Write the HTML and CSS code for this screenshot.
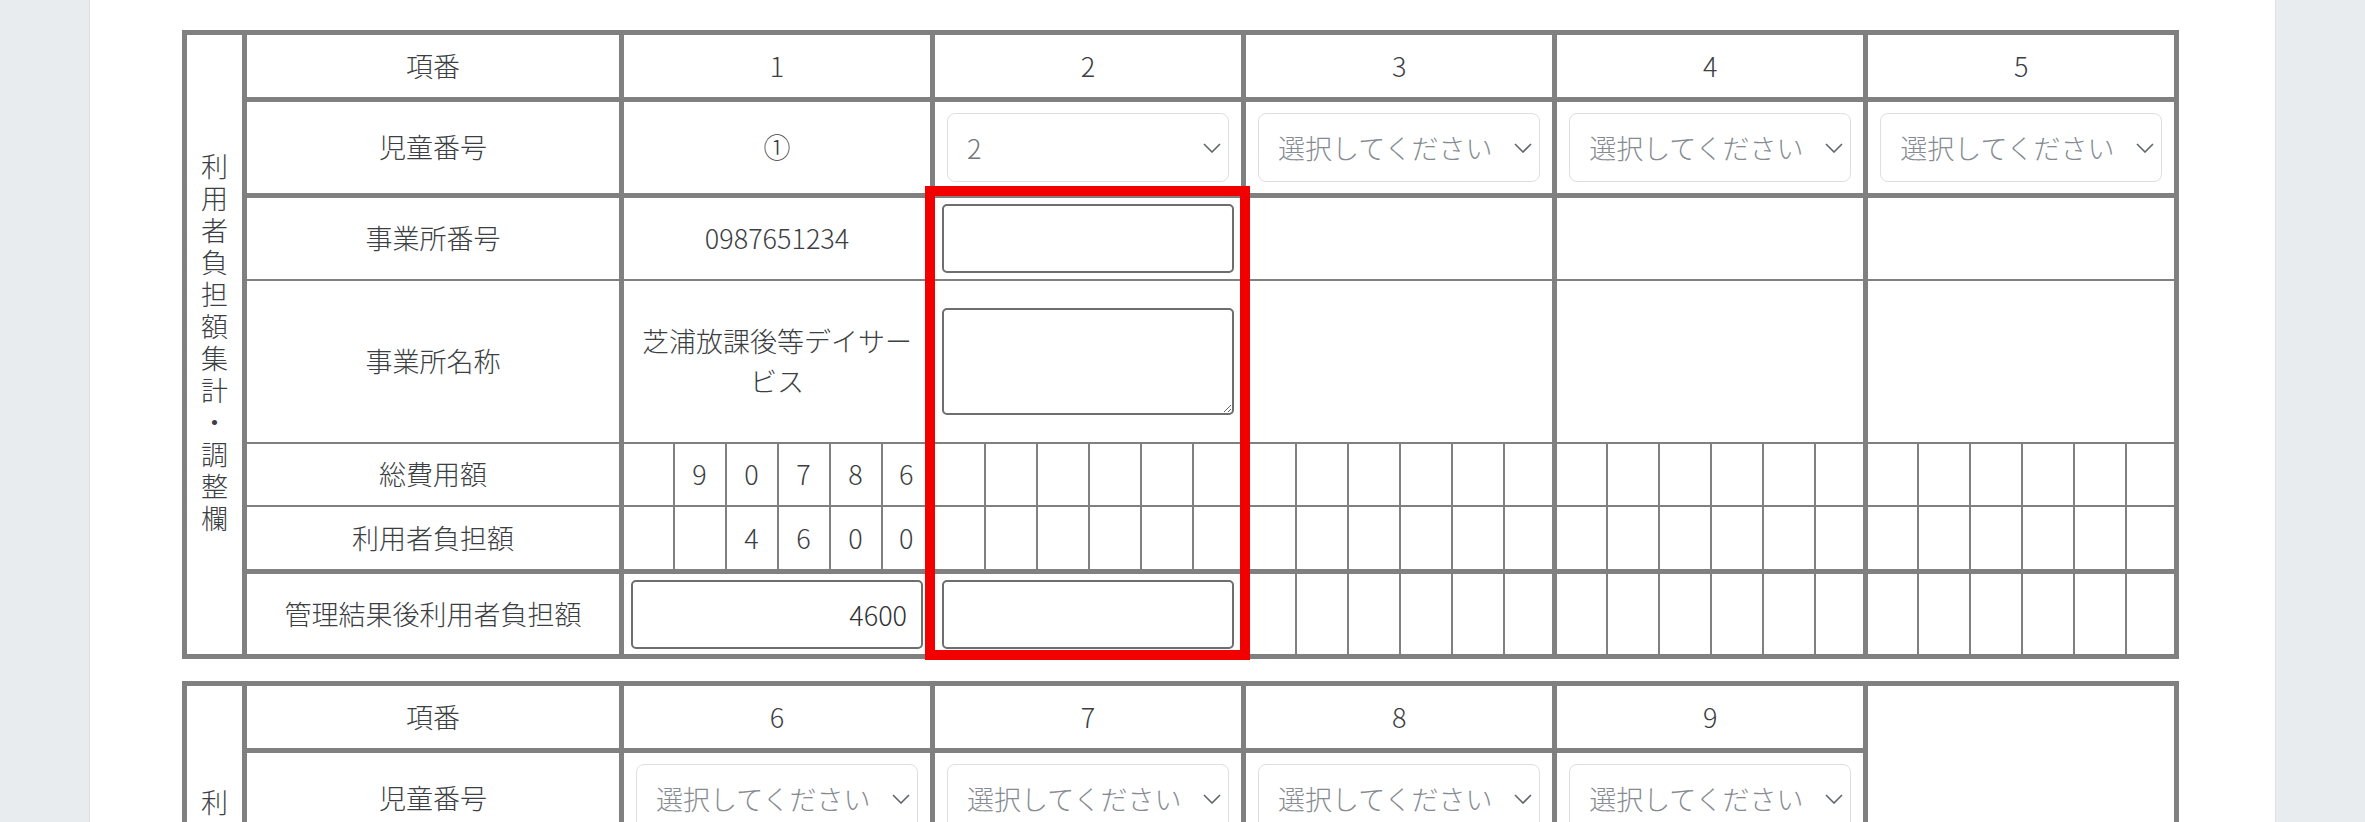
FILE: index.html
```html
<!DOCTYPE html>
<html lang="ja">
<head>
<meta charset="utf-8">
<title>利用者負担額集計・調整欄</title>
<link rel="stylesheet" href="styles.css">
</head>
<body>
<div class="page">
  <div class="sheet">
    <table class="grid">
      <colgroup>
        <col class="c-v"><col class="c-l">
        <col class="c-d"><col class="c-d"><col class="c-d"><col class="c-d"><col class="c-d"><col class="c-e">
        <col class="c-d"><col class="c-d"><col class="c-d"><col class="c-d"><col class="c-d"><col class="c-e">
        <col class="c-d"><col class="c-d"><col class="c-d"><col class="c-d"><col class="c-d"><col class="c-e">
        <col class="c-d"><col class="c-d"><col class="c-d"><col class="c-d"><col class="c-d"><col class="c-e">
        <col class="c-d"><col class="c-d"><col class="c-d"><col class="c-d"><col class="c-d"><col class="c-e">
      </colgroup>
      <tbody>
        <tr class="r-no b-thick">
          <th rowspan="7" class="vhead"><div class="vtext">利用者負担額集計・調整欄</div></th>
          <th class="label">項番</th>
          <td colspan="6">1</td><td colspan="6">2</td><td colspan="6">3</td><td colspan="6">4</td><td colspan="6">5</td>
        </tr>
        <tr class="r-child b-thick">
          <th class="label">児童番号</th>
          <td colspan="6">①</td>
          <td colspan="6"><div class="selwrap"><select class="sel sel-value"><option>2</option></select><svg class="chev" width="18" height="10" viewBox="0 0 18 10"><polyline points="1,1 9,9 17,1"/></svg></div></td>
          <td colspan="6"><div class="selwrap"><select class="sel"><option>選択してください</option></select><svg class="chev" width="18" height="10" viewBox="0 0 18 10"><polyline points="1,1 9,9 17,1"/></svg></div></td>
          <td colspan="6"><div class="selwrap"><select class="sel"><option>選択してください</option></select><svg class="chev" width="18" height="10" viewBox="0 0 18 10"><polyline points="1,1 9,9 17,1"/></svg></div></td>
          <td colspan="6"><div class="selwrap"><select class="sel"><option>選択してください</option></select><svg class="chev" width="18" height="10" viewBox="0 0 18 10"><polyline points="1,1 9,9 17,1"/></svg></div></td>
        </tr>
        <tr class="r-office b-thin">
          <th class="label">事業所番号</th>
          <td colspan="6">0987651234</td>
          <td colspan="6"><input class="field" type="text"></td>
          <td colspan="6"></td><td colspan="6"></td><td colspan="6"></td>
        </tr>
        <tr class="r-name b-thin">
          <th class="label">事業所名称</th>
          <td colspan="6" class="wrap">芝浦放課後等デイサービス</td>
          <td colspan="6"><textarea class="area"></textarea></td>
          <td colspan="6"></td><td colspan="6"></td><td colspan="6"></td>
        </tr>
        <tr class="r-digit b-thin">
          <th class="label">総費用額</th>
          <td class="sub g"></td><td class="sub">9</td><td class="sub">0</td><td class="sub">7</td><td class="sub">8</td><td class="sub ge">6</td>
          <td class="sub g"></td><td class="sub"></td><td class="sub"></td><td class="sub"></td><td class="sub"></td><td class="sub ge"></td>
          <td class="sub g"></td><td class="sub"></td><td class="sub"></td><td class="sub"></td><td class="sub"></td><td class="sub ge"></td>
          <td class="sub g"></td><td class="sub"></td><td class="sub"></td><td class="sub"></td><td class="sub"></td><td class="sub ge"></td>
          <td class="sub g"></td><td class="sub"></td><td class="sub"></td><td class="sub"></td><td class="sub"></td><td class="sub ge"></td>
        </tr>
        <tr class="r-digit2 b-thick">
          <th class="label">利用者負担額</th>
          <td class="sub g"></td><td class="sub"></td><td class="sub">4</td><td class="sub">6</td><td class="sub">0</td><td class="sub ge">0</td>
          <td class="sub g"></td><td class="sub"></td><td class="sub"></td><td class="sub"></td><td class="sub"></td><td class="sub ge"></td>
          <td class="sub g"></td><td class="sub"></td><td class="sub"></td><td class="sub"></td><td class="sub"></td><td class="sub ge"></td>
          <td class="sub g"></td><td class="sub"></td><td class="sub"></td><td class="sub"></td><td class="sub"></td><td class="sub ge"></td>
          <td class="sub g"></td><td class="sub"></td><td class="sub"></td><td class="sub"></td><td class="sub"></td><td class="sub ge"></td>
        </tr>
        <tr class="r-final b-thick">
          <th class="label">管理結果後利用者負担額</th>
          <td colspan="6"><input class="field num" type="text" value="4600"></td>
          <td colspan="6"><input class="field" type="text"></td>
          <td class="sub g"></td><td class="sub"></td><td class="sub"></td><td class="sub"></td><td class="sub"></td><td class="sub ge"></td>
          <td class="sub g"></td><td class="sub"></td><td class="sub"></td><td class="sub"></td><td class="sub"></td><td class="sub ge"></td>
          <td class="sub g"></td><td class="sub"></td><td class="sub"></td><td class="sub"></td><td class="sub"></td><td class="sub ge"></td>
        </tr>
      </tbody>
    </table>
    <div class="highlight"></div>
  </div>

  <div class="sheet sheet-second">
    <table class="grid">
      <colgroup>
        <col class="c-v"><col class="c-l">
        <col class="c-d"><col class="c-d"><col class="c-d"><col class="c-d"><col class="c-d"><col class="c-e">
        <col class="c-d"><col class="c-d"><col class="c-d"><col class="c-d"><col class="c-d"><col class="c-e">
        <col class="c-d"><col class="c-d"><col class="c-d"><col class="c-d"><col class="c-d"><col class="c-e">
        <col class="c-d"><col class="c-d"><col class="c-d"><col class="c-d"><col class="c-d"><col class="c-e">
        <col class="c-d"><col class="c-d"><col class="c-d"><col class="c-d"><col class="c-d"><col class="c-e">
      </colgroup>
      <tbody>
        <tr class="r-no b-thick">
          <th rowspan="7" class="vhead"><div class="vtext">利用者負担額集計・調整欄</div></th>
          <th class="label">項番</th>
          <td colspan="6">6</td><td colspan="6">7</td><td colspan="6">8</td><td colspan="6">9</td>
          <td colspan="6" rowspan="7" class="blank"></td>
        </tr>
        <tr class="r-child b-thick">
          <th class="label">児童番号</th>
          <td colspan="6"><div class="selwrap"><select class="sel"><option>選択してください</option></select><svg class="chev" width="18" height="10" viewBox="0 0 18 10"><polyline points="1,1 9,9 17,1"/></svg></div></td>
          <td colspan="6"><div class="selwrap"><select class="sel"><option>選択してください</option></select><svg class="chev" width="18" height="10" viewBox="0 0 18 10"><polyline points="1,1 9,9 17,1"/></svg></div></td>
          <td colspan="6"><div class="selwrap"><select class="sel"><option>選択してください</option></select><svg class="chev" width="18" height="10" viewBox="0 0 18 10"><polyline points="1,1 9,9 17,1"/></svg></div></td>
          <td colspan="6"><div class="selwrap"><select class="sel"><option>選択してください</option></select><svg class="chev" width="18" height="10" viewBox="0 0 18 10"><polyline points="1,1 9,9 17,1"/></svg></div></td>
        </tr>
        <tr class="r-office b-thin">
          <th class="label">事業所番号</th>
          <td colspan="6"></td><td colspan="6"></td><td colspan="6"></td><td colspan="6"></td>
        </tr>
        <tr class="r-name2 b-thin">
          <th class="label">事業所名称</th>
          <td colspan="6"></td><td colspan="6"></td><td colspan="6"></td><td colspan="6"></td>
        </tr>
        <tr class="r-digit b-thin">
          <th class="label">総費用額</th>
          <td class="sub g"></td><td class="sub"></td><td class="sub"></td><td class="sub"></td><td class="sub"></td><td class="sub ge"></td>
          <td class="sub g"></td><td class="sub"></td><td class="sub"></td><td class="sub"></td><td class="sub"></td><td class="sub ge"></td>
          <td class="sub g"></td><td class="sub"></td><td class="sub"></td><td class="sub"></td><td class="sub"></td><td class="sub ge"></td>
          <td class="sub g"></td><td class="sub"></td><td class="sub"></td><td class="sub"></td><td class="sub"></td><td class="sub ge"></td>
        </tr>
        <tr class="r-digit2 b-thick">
          <th class="label">利用者負担額</th>
          <td class="sub g"></td><td class="sub"></td><td class="sub"></td><td class="sub"></td><td class="sub"></td><td class="sub ge"></td>
          <td class="sub g"></td><td class="sub"></td><td class="sub"></td><td class="sub"></td><td class="sub"></td><td class="sub ge"></td>
          <td class="sub g"></td><td class="sub"></td><td class="sub"></td><td class="sub"></td><td class="sub"></td><td class="sub ge"></td>
          <td class="sub g"></td><td class="sub"></td><td class="sub"></td><td class="sub"></td><td class="sub"></td><td class="sub ge"></td>
        </tr>
        <tr class="r-final b-thick">
          <th class="label">管理結果後利用者負担額</th>
          <td colspan="6"></td><td colspan="6"></td><td colspan="6"></td><td colspan="6"></td>
        </tr>
      </tbody>
    </table>
  </div>
</div>
</body>
</html>
```

FILE: styles.css
```css
html, body {
  margin: 0;
  padding: 0;
}

body {
  background: #e9ecef;
  font-family: "Noto Sans CJK JP", "Noto Sans", sans-serif;
  font-size: 27px;
  font-weight: 300;
  color: #3b3e42;
  overflow: hidden;
}

.page {
  box-sizing: border-box;
  width: 2187px;
  height: 822px;
  margin: 0 auto;
  padding: 30px 0 0 92px;
  background: #ffffff;
  border-left: 1px solid #dde1e5;
  border-right: 1px solid #dde1e5;
  overflow: hidden;
}

.sheet {
  position: relative;
  width: 1997px;
}

.sheet-second {
  margin-top: 22px;
}

.grid {
  border-collapse: collapse;
  table-layout: fixed;
  width: 1997px;
  border: 5px solid #808080;
}

.c-v { width: 60px; }
.c-l { width: 377px; }
.c-d { width: 52px; }
.c-e { width: 51px; }

.grid th,
.grid td {
  padding: 0;
  border-top: none;
  border-bottom: none;
  border-left: 5px solid #808080;
  border-right: 5px solid #808080;
  text-align: center;
  vertical-align: middle;
  font-weight: 300;
  line-height: 1.5;
  background: #ffffff;
}

.grid td.sub {
  border-left: 2px solid #808080;
  border-right: 2px solid #808080;
}

.grid td.sub.g { border-left: 5px solid #808080; }
.grid td.sub.ge { border-right: 5px solid #808080; }

.b-thick > th,
.b-thick > td {
  border-bottom: 5px solid #808080;
}

.b-thin > th,
.b-thin > td {
  border-bottom: 2px solid #808080;
}

.grid .vhead {
  border-bottom: 5px solid #808080;
}

.grid .blank {
  border-bottom: 5px solid #808080;
}

.vtext {
  writing-mode: vertical-rl;
  text-orientation: upright;
  letter-spacing: 5px;
  line-height: 1;
  margin: 0 auto;
}

.r-no { height: 67px; }
.r-child { height: 96px; }
.r-office { height: 84px; }
.r-name { height: 163px; }
.r-name2 { height: 133px; }
.r-digit { height: 63px; }
.r-digit2 { height: 66px; }
.r-final { height: 85px; }

.grid td.wrap {
  padding: 0 9px;
}

.selwrap {
  position: relative;
  width: calc(100% - 24px);
  margin: 0 auto;
}

.sel {
  display: block;
  box-sizing: border-box;
  width: 100%;
  height: 69px;
  margin: 0;
  padding: 0 36px 0 19px;
  border: 1.5px solid #dcdfe2;
  border-radius: 8px;
  background: #ffffff;
  font-family: inherit;
  font-size: 27px;
  font-weight: 300;
  color: #858b91;
  -webkit-appearance: none;
  appearance: none;
  outline: none;
}

.sel-value {
  color: #70757a;
}

.chev {
  position: absolute;
  right: 8px;
  top: 30px;
  pointer-events: none;
}

.chev polyline {
  fill: none;
  stroke: #60656a;
  stroke-width: 1.6;
}

.field {
  display: block;
  box-sizing: border-box;
  width: calc(100% - 14px);
  height: 69px;
  margin: 0 auto;
  padding: 0 14px;
  border: 2px solid #6e6e6e;
  border-radius: 5px;
  background: #ffffff;
  font-family: inherit;
  font-size: 27px;
  font-weight: 300;
  color: #2f3236;
  outline: none;
}

.field.num {
  text-align: right;
}

.area {
  display: block;
  box-sizing: border-box;
  width: calc(100% - 14px);
  height: 107px;
  margin: 0 auto;
  padding: 8px 14px;
  border: 2px solid #6e6e6e;
  border-radius: 5px;
  background: #ffffff;
  font-family: inherit;
  font-size: 27px;
  outline: none;
  resize: both;
}

.highlight {
  position: absolute;
  left: 743px;
  top: 156px;
  width: 325px;
  height: 474px;
  box-sizing: border-box;
  border: 10px solid #f20000;
  pointer-events: none;
}
```
